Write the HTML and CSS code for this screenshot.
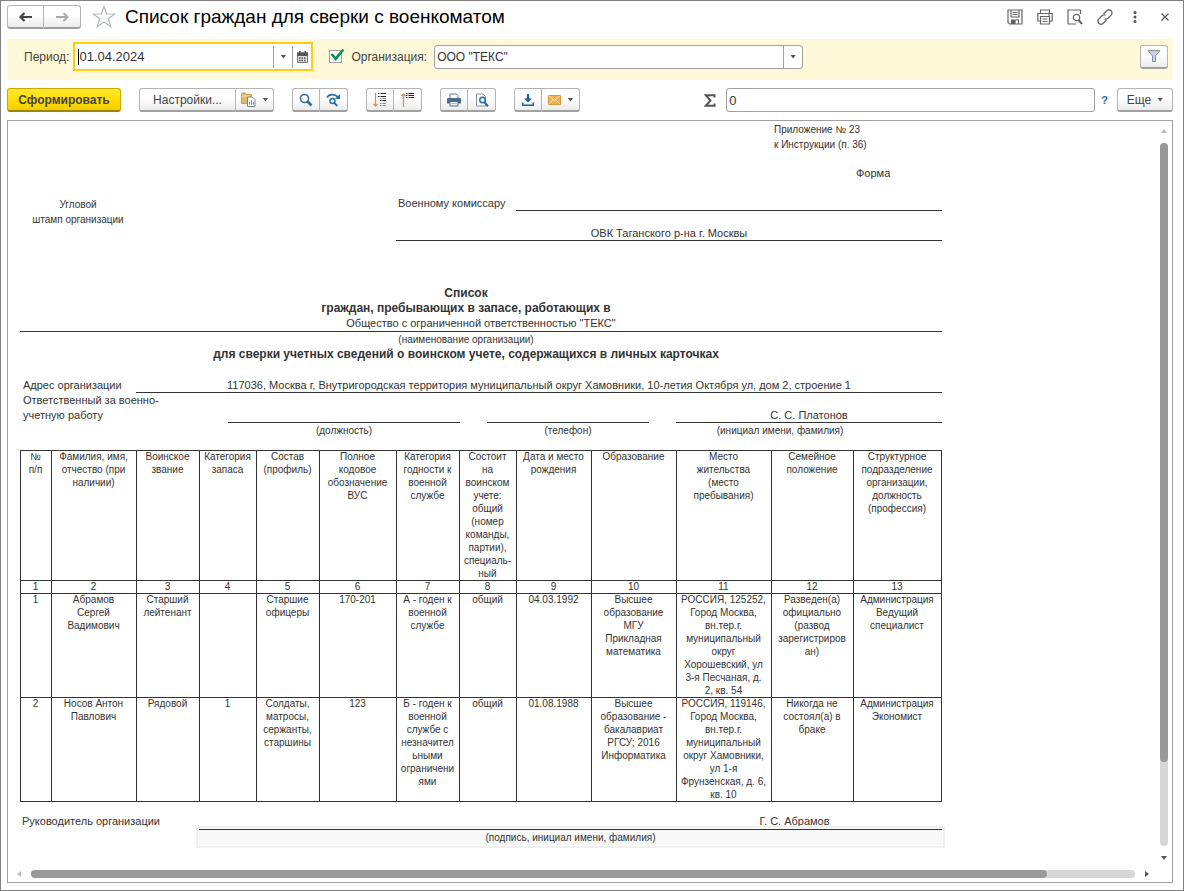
FILE: index.html
```html
<!DOCTYPE html>
<html lang="ru">
<head>
<meta charset="utf-8">
<title>Список граждан для сверки с военкоматом</title>
<link rel="stylesheet" href="styles.css">
</head>
<body>
<div class="window">
  <header class="titlebar">
    <div class="group nav">
      <button class="btn nav-btn" aria-label="Назад"><svg width="16" height="12" viewBox="0 0 16 12"><path d="M6.500 2 2.500 6l4 4M2.500 6H14" fill="none" stroke="#444" stroke-width="2.200"/></svg></button>
      <button class="btn nav-btn" aria-label="Вперед"><svg width="16" height="12" viewBox="0 0 16 12"><path d="M9.500 2l4 4-4 4M13.500 6H2" fill="none" stroke="#aaa" stroke-width="2"/></svg></button>
    </div>
    <button class="plain star" aria-label="В избранное"><svg width="24" height="24" viewBox="0 0 24 24"><path d="M12 1.500 14.700 9H22.800L16.300 13.800 18.800 21.800 12 17 5.200 21.800 7.700 13.800 1.200 9H9.300Z" fill="#fff" stroke="#b4b8bc" stroke-width="1.200"/></svg></button>
    <h1 class="title">Список граждан для сверки с военкоматом</h1>
    <div class="window-tools">
      <button class="plain" aria-label="Сохранить"><svg width="16" height="16" viewBox="0 0 16 16" fill="none" stroke="#666" stroke-width="1.200"><path d="M1 1h14v14H2.500L1 13.500ZM4 1v7h8V1M5.500 3.500h5M5.500 5.500h5M4.500 15v-4h7v4"/><path d="M5 11.500h3v3H5Z" fill="#555"/></svg></button>
      <button class="plain" aria-label="Печать"><svg width="16" height="16" viewBox="0 0 16 16" fill="none" stroke="#666" stroke-width="1.200"><path d="M3.500 4.500V1h9v3.500M3.500 12H.8V4.500h14.400V12h-2.700M3.500 7.500h9V15h-9ZM5.500 10h5M5.500 12.500h5M11 6h2"/></svg></button>
      <button class="plain" aria-label="Просмотр"><svg width="16" height="16" viewBox="0 0 16 16" fill="none" stroke="#666" stroke-width="1.200"><path d="M13.500 5V1H1v14h8"/><circle cx="9.500" cy="8.500" r="3.200"/><path d="m11.500 11 3.500 4" stroke-width="2"/></svg></button>
      <button class="plain" aria-label="Ссылка"><svg width="16" height="16" viewBox="0 0 16 16" fill="none" stroke="#666" stroke-width="1.300"><path d="M6.500 5 9.800 1.800a3 3 0 0 1 4.300 4.300L11 9.300a3 3 0 0 1-3.500.4M9.500 11l-3.300 3.200a3 3 0 0 1-4.300-4.300L5 6.700a3 3 0 0 1 3.500-.4"/></svg></button>
      <button class="plain" aria-label="Меню"><svg width="16" height="16" viewBox="0 0 16 16" fill="#555"><circle cx="8" cy="3.500" r="1.500"/><circle cx="8" cy="8" r="1.500"/><circle cx="8" cy="12.500" r="1.500"/></svg></button>
      <button class="plain" aria-label="Закрыть"><svg width="16" height="16" viewBox="0 0 16 16" fill="none" stroke="#555" stroke-width="1.200"><path d="m4.500 4.500 7 7M11.500 4.500l-7 7"/></svg></button>
    </div>
  </header>

  <section class="filters">
    <label class="label" for="period">Период:</label>
    <div class="field field-active">
      <span class="caret"></span>
      <input class="input input-date" id="period" type="text" value="01.04.2024">
      <button class="addon" aria-label="Выбрать период"><i class="arrow"></i></button>
      <button class="addon" aria-label="Календарь"><svg width="11" height="12" viewBox="0 0 11 12"><path d="M.5 2h10v9.500H.5Z" fill="#ddd" stroke="#777"/><path d="M0 1.500h11v3.500H0ZM2 0h1.500v2H2ZM7.500 0H9v2H7.500Z" fill="#555"/><path d="M2 7h7M2 9.500h7" stroke="#555" stroke-width="1.500" stroke-dasharray="1.500 1"/></svg></button>
    </div>
    <input class="check" id="use-org" type="checkbox" checked>
    <label class="label label-org" for="use-org">Организация:</label>
    <div class="field field-org">
      <select class="input" aria-label="Организация"><option>ООО "ТЕКС"</option></select>
      <span class="addon addon-passive"><i class="arrow"></i></span>
    </div>
    <button class="btn btn-filter" aria-label="Отбор"><svg width="14" height="14" viewBox="0 0 14 14"><path d="M1 1.500h12L8.500 7v5.500h-3V7Z" fill="#c9d2dc" stroke="#8793a0"/></svg></button>
  </section>

  <section class="toolbar">
    <button class="btn btn-main">Сформировать</button>
    <div class="group">
      <button class="btn btn-settings">Настройки...</button>
      <button class="btn btn-wide" aria-label="Варианты отчета"><svg width="15" height="15" viewBox="0 0 15 15"><path d="M.5 2V11.500h10V2.500H5.500L4.500 1h-3Z" fill="#e8b868" stroke="#c99b50"/><path d="M.5 4h10" stroke="#fbe1a5"/><path d="M6.500 5h5L14 7.500v7H6.500Z" fill="#fff" stroke="#6f8799"/><path d="M8.500 12.500V10M10.500 12.500V8.500M12.500 12.500V10" stroke="#d0603c"/></svg><i class="arrow"></i></button>
    </div>
    <div class="group">
      <button class="btn btn-icon" aria-label="Найти"><svg width="14" height="14" viewBox="0 0 14 14" fill="none" stroke="#2d6da3"><circle cx="5.500" cy="5.500" r="4" stroke-width="1.600"/><path d="m8.500 8.500 4 4" stroke-width="2.600"/></svg></button>
      <button class="btn btn-icon" aria-label="Найти далее"><svg width="15" height="14" viewBox="0 0 15 14" fill="none" stroke="#2d6da3"><path d="M1 4.500C3 1 8 .5 12 4" stroke-width="1.800"/><path d="M14 1v5H9Z" fill="#2d6da3" stroke="none"/><circle cx="6.500" cy="8" r="2.500" stroke-width="1.400"/><path d="m8.300 10 3 3" stroke-width="1.800"/></svg></button>
    </div>
    <div class="group">
      <button class="btn btn-icon" aria-label="Развернуть группы"><svg width="14" height="16" viewBox="0 0 14 16" fill="none"><path d="M2.500 1v13M.5 12l2 2 2-2" stroke="#ee7f5c" stroke-width="1.200"/><path d="M5 1.500h1.500M7.500 1.500H13M7 8.500h1.500M9.500 8.500H13M5 4.500h1.500M7.500 4.500H13" stroke="#222"/><path d="M7 6.500h1.500M9.500 6.500H13M7 11.500h1.500M9.500 11.500H13M7 13.500h1.500M9.500 13.500H13" stroke="#888"/></svg></button>
      <button class="btn btn-icon" aria-label="Свернуть группы"><svg width="14" height="16" viewBox="0 0 14 16" fill="none"><path d="M2.500 15V2M.5 4l2-2 2 2" stroke="#ee7f5c" stroke-width="1.200"/><path d="M5 1.500h1.500M7.500 1.500H13M5 3.500h1.500M7.500 3.500H13M5 5.500h1.500M7.500 5.500H13" stroke="#222"/></svg></button>
    </div>
    <div class="group">
      <button class="btn btn-icon" aria-label="Печать"><svg width="14" height="14" viewBox="0 0 14 14"><path d="M3 1h6.500L11 2.500V6H3Z" fill="#fff" stroke="#5a7894"/><path d="M1 5h12q1 0 1 1v4.500H0V6q0-1 1-1Z" fill="#4c6d8f"/><path d="M3 8.500h8V13H3Z" fill="#fff" stroke="#4c6d8f"/><path d="M4.500 10.700h5" stroke="#9ab"/></svg></button>
      <button class="btn btn-icon" aria-label="Предварительный просмотр"><svg width="14" height="14" viewBox="0 0 14 14" fill="none"><path d="M1.500 1h6.500l2.500 2.500V13h-9Z" fill="#fff" stroke="#7d93a8"/><circle cx="7.500" cy="7" r="2.800" fill="#e5f2fb" stroke="#2d6da3" stroke-width="1.500"/><path d="m9.500 9.300 3.500 4" stroke="#2d6da3" stroke-width="2.200"/></svg></button>
    </div>
    <div class="group">
      <button class="btn btn-icon" aria-label="Сохранить как"><svg width="14" height="14" viewBox="0 0 14 14" fill="#1f5f92"><path d="M6 1h2v4.500h3L7 9.500 3 5.500h3ZM1 9.500h1.500v2h9v-2H13V13H1Z"/></svg></button>
      <button class="btn btn-wide" aria-label="Отправить"><svg width="13" height="10" viewBox="0 0 13 10"><path d="M.5.5h12v9H.5Z" fill="#f0b250" stroke="#d9993c"/><path d="m1 1 5.500 4.500L12 1M1 9l4-4M12 9 8 5" fill="none" stroke="#fbe0a8"/></svg><i class="arrow"></i></button>
    </div>
    <label class="sigma" for="sum" aria-label="Сумма"><svg width="12" height="13" viewBox="0 0 12 13"><path d="M10.500 3.500V1.200H1.800L6.500 6.500 1.800 11.800h8.700V9.500" fill="none" stroke="#555" stroke-width="2"/></svg></label>
    <div class="field field-sum"><input class="input input-date" id="sum" type="text" value="0"></div>
    <button class="plain help">?</button>
    <button class="btn btn-more">Еще<i class="arrow"></i></button>
  </section>

  <main class="viewer">
    <div class="page">
      <article class="sheet">
        <div class="top">
          <div class="stamp small">Угловой<br>штамп организации</div>
          <div class="heading">
            <div class="annex small">Приложение № 23<br>к Инструкции (п. 36)</div>
            <div class="form-word">Форма</div>
            <div class="to"><span class="to-label">Военному комиссару</span><span class="to-line line"></span></div>
            <div class="commissariat line">ОВК Таганского р-на г. Москвы</div>
          </div>
        </div>

        <h2 class="heading-text shifted">Список<br>граждан, пребывающих в запасе, работающих в</h2>
        <div class="org-name line">Общество с ограниченной ответственностью "ТЕКС"</div>
        <div class="small caption shifted">(наименование организации)</div>
        <h2 class="heading-text shifted">для сверки учетных сведений о воинском учете, содержащихся в личных карточках</h2>

        <div class="address"><span class="address-label">Адрес организации</span><span class="address-value line">117036, Москва г, Внутригородская территория муниципальный округ Хамовники, 10-летия Октября ул, дом 2, строение 1</span></div>
        <div class="responsible">
          <div class="resp-label">Ответственный за военно-<br>учетную работу</div>
          <div class="resp-post"><div class="blank line"></div><div class="small caption">(должность)</div></div>
          <div class="resp-phone"><div class="blank line"></div><div class="small caption">(телефон)</div></div>
          <div class="resp-name"><div class="blank line">С. С. Платонов</div><div class="small caption caption-name">(инициал имени, фамилия)</div></div>
        </div>

        <table class="people small">
          <colgroup><col class="w31"><col class="w85"><col class="w63"><col class="w57"><col class="w63"><col class="w77"><col class="w63"><col class="w57"><col class="w75"><col class="w85"><col class="w95"><col class="w82"><col class="w88"></colgroup>
          <thead>
            <tr>
              <th>№<br>п/п</th>
              <th>Фамилия, имя,<br>отчество (при<br>наличии)</th>
              <th>Воинское<br>звание</th>
              <th>Категория<br>запаса</th>
              <th>Состав<br>(профиль)</th>
              <th>Полное<br>кодовое<br>обозначение<br>ВУС</th>
              <th>Категория<br>годности к<br>военной<br>службе</th>
              <th>Состоит<br>на<br>воинском<br>учете:<br>общий<br>(номер<br>команды,<br>партии),<br>специаль-<br>ный</th>
              <th>Дата и место<br>рождения</th>
              <th>Образование</th>
              <th>Место<br>жительства<br>(место<br>пребывания)</th>
              <th>Семейное<br>положение</th>
              <th>Структурное<br>подразделение<br>организации,<br>должность<br>(профессия)</th>
            </tr>
            <tr><th>1</th><th>2</th><th>3</th><th>4</th><th>5</th><th>6</th><th>7</th><th>8</th><th>9</th><th>10</th><th>11</th><th>12</th><th>13</th></tr>
          </thead>
          <tbody>
            <tr>
              <td>1</td>
              <td>Абрамов<br>Сергей<br>Вадимович</td>
              <td>Старший<br>лейтенант</td>
              <td></td>
              <td>Старшие<br>офицеры</td>
              <td>170-201</td>
              <td>А - годен к<br>военной<br>службе</td>
              <td>общий</td>
              <td>04.03.1992</td>
              <td>Высшее<br>образование<br>МГУ<br>Прикладная<br>математика</td>
              <td>РОССИЯ, 125252,<br>Город Москва,<br>вн.тер.г.<br>муниципальный<br>округ<br>Хорошевский, ул<br>3-я Песчаная, д.<br>2, кв. 54</td>
              <td>Разведен(а)<br>официально<br>(развод<br>зарегистриров<br>ан)</td>
              <td>Администрация<br>Ведущий<br>специалист</td>
            </tr>
            <tr>
              <td>2</td>
              <td>Носов Антон<br>Павлович</td>
              <td>Рядовой</td>
              <td>1</td>
              <td>Солдаты,<br>матросы,<br>сержанты,<br>старшины</td>
              <td>123</td>
              <td>Б - годен к<br>военной<br>службе с<br>незначител<br>ьными<br>ограничени<br>ями</td>
              <td>общий</td>
              <td>01.08.1988</td>
              <td>Высшее<br>образование -<br>бакалавриат<br>РГСУ; 2016<br>Информатика</td>
              <td>РОССИЯ, 119146,<br>Город Москва,<br>вн.тер.г.<br>муниципальный<br>округ Хамовники,<br>ул 1-я<br>Фрунзенская, д. 6,<br>кв. 10</td>
              <td>Никогда не<br>состоял(а) в<br>браке</td>
              <td>Администрация<br>Экономист</td>
            </tr>
          </tbody>
        </table>

        <div class="signature">
          <span class="sign-label">Руководитель организации</span>
          <span class="sign-name">Г. С. Абрамов</span>
        </div>
        <div class="sign-cell small">(подпись, инициал имени, фамилия)</div>
      </article>
    </div>
    <div class="scroll scroll-v">
      <i class="tip tip-up"></i>
      <div class="track"><div class="thumb"></div></div>
      <i class="tip tip-down"></i>
    </div>
    <div class="scroll scroll-h">
      <i class="tip tip-left"></i>
      <div class="track"><div class="thumb"></div></div>
      <i class="tip tip-right"></i>
    </div>
  </main>
</div>
</body>
</html>
```

FILE: styles.css
```css
* { box-sizing: border-box; }

body {
  margin: 0;
  font-family: "Liberation Sans", Arial, sans-serif;
  font-size: 12px;
  color: #444;
  background: #fff;
}

button, input, select { font: inherit; color: inherit; }
svg { display: block; flex: none; }

.window {
  display: flex;
  flex-direction: column;
  height: 100vh;
  padding: 0 10px 7px 6px;
  border: 1px solid #808080;
}

/* Title bar */
.titlebar {
  display: flex;
  align-items: center;
  height: 38px;
  padding-bottom: 6px;
}

.plain {
  display: flex;
  align-items: center;
  justify-content: center;
  padding: 0;
  border: 0;
  background: none;
}

.star { margin: 0 9px 0 11px; }

.title {
  margin: 0;
  font-size: 19px;
  font-weight: 400;
  line-height: 24px;
  color: #000;
  white-space: nowrap;
}

.window-tools {
  display: flex;
  gap: 14px;
  margin-left: auto;
}

/* Buttons */
.group { display: flex; }

.btn {
  display: flex;
  align-items: center;
  justify-content: center;
  height: 24px;
  padding: 0;
  border: 1px solid #b4b4b4;
  border-bottom: 2px solid #a0a0a0;
  border-radius: 3px;
  background: linear-gradient(#fff 40%, #ececec);
  white-space: nowrap;
}

.group .btn + .btn {
  border-left: 0;
  border-top-left-radius: 0;
  border-bottom-left-radius: 0;
}

.group .btn:first-child {
  border-top-right-radius: 0;
  border-bottom-right-radius: 0;
}

.nav-btn { width: 37px; }
.btn-icon { width: 28px; }
.btn-wide { width: 38px; gap: 7px; }
.btn-settings { width: 97px; }
.btn-more { width: 56px; gap: 6px; }
.btn-filter { width: 28px; margin-left: auto; }

.btn-main {
  width: 114px;
  border-color: #c9ab00;
  border-bottom-color: #9c8500;
  background: linear-gradient(#ffe82e, #ffdc00 60%, #f2cd00);
  font-weight: 700;
}

.arrow {
  width: 6px;
  height: 4px;
  background: #555;
  clip-path: polygon(0 0, 100% 0, 50% 100%);
}

/* Fields */
.field {
  display: flex;
  align-items: center;
  height: 24px;
  border: 1px solid #a0a0a0;
  border-radius: 3px;
  background: #fff;
}

.input {
  flex: 1;
  min-width: 0;
  height: 100%;
  padding: 0 2px;
  border: 0;
  outline: 0;
  background: none;
  color: #333;
  appearance: none;
}

.input-date { font-size: 13px; }

.addon {
  display: flex;
  align-items: center;
  justify-content: center;
  width: 19px;
  height: 22px;
  padding: 0;
  border: 0;
  border-left: 1px solid #a0a0a0;
  background: none;
}

.addon-passive { pointer-events: none; }

.filters {
  display: flex;
  align-items: center;
  height: 41px;
  padding: 0 5px 6px 17px;
  background: #fff9da;
}

.label { white-space: nowrap; }

.field-active {
  width: 240px;
  height: 29px;
  margin-left: 4px;
  padding-left: 3px;
  border: 2px solid #fc1;
  border-radius: 0;
}

.field-active .input { padding: 0; }
.caret { width: 1px; height: 16px; background: #000; }

.check {
  width: 13px;
  height: 13px;
  margin: 0 9px 0 16px;
  appearance: none;
  border: 1px solid #a0a0a0;
  background: #fff;
  overflow: visible;
}

.check:checked::before {
  content: "";
  display: block;
  width: 14px;
  height: 12px;
  margin-top: -2px;
  background: #009646;
  clip-path: polygon(0 45%, 18% 38%, 36% 64%, 86% 0, 100% 8%, 38% 100%);
}

.field-org {
  width: 369px;
  margin-left: 7px;
}

/* Toolbar */
.toolbar {
  display: flex;
  align-items: center;
  gap: 18px;
  height: 40px;
}

.sigma { margin-left: auto; }
.field-sum { width: 369px; margin-left: -8px; }
.help { margin: 0 -9px 0 -12px; font-size: 11px; font-weight: 700; color: #1a6fb0; }

/* Report viewer */
.viewer {
  display: grid;
  flex: 1;
  grid-template-columns: 1fr 16px;
  grid-template-rows: 1fr 16px;
  min-height: 0;
  border: 1px solid #a0a0a0;
}

.page { overflow: hidden; padding: 1px 0 0 12px; }

.sheet {
  width: 922px;
  font-size: 11px;
  line-height: 15px;
  color: #333;
}

.small { font-size: 10px; }
.line { border-bottom: 1px solid #333; }

.top { display: grid; grid-template-columns: 116px 1fr; }
.stamp { padding-top: 75px; text-align: center; }
.heading { padding-left: 260px; }
.annex { padding-left: 378px; }
.form-word { margin: 14px 0 15px; padding-left: 460px; }
.to { display: flex; height: 15px; }
.to-label { padding-left: 2px; width: 120px; }
.to-line { flex: 1; }
.commissariat { height: 15px; margin: 15px 0 45px; text-align: center; }

.heading-text {
  margin: 0;
  font-size: 12px;
  font-weight: 700;
  line-height: 15px;
  text-align: center;
}

.shifted { margin-right: 30px; }
.caption { text-align: center; }
.org-name { text-align: center; }

.address { display: flex; height: 15px; margin-top: 16px; }
.address-label { width: 116px; padding-left: 3px; }
.address-value { flex: 1; text-align: center; white-space: nowrap; }

.responsible {
  display: grid;
  grid-template-columns: 181px 232px 162px 266px;
  column-gap: 27px;
}

.resp-label { padding-left: 3px; white-space: nowrap; }
.blank { height: 30px; padding-top: 15px; text-align: center; }
.caption-name { padding-right: 58px; }

.people {
  width: 922px;
  margin-top: 12px;
  table-layout: fixed;
  border-collapse: separate;
  border-spacing: 0;
  border-right: 1px solid #333;
  border-bottom: 1px solid #333;
  line-height: 13px;
}

.people th,
.people td {
  padding: 0;
  box-shadow: inset 1px 1px #333;
  font-weight: 400;
  text-align: center;
  vertical-align: top;
  white-space: nowrap;
}

.w31 { width: 31px; }
.w57 { width: 57px; }
.w63 { width: 63px; }
.w75 { width: 75px; }
.w77 { width: 77px; }
.w82 { width: 82px; }
.w85 { width: 85px; }
.w88 { width: 88px; }
.w95 { width: 95px; }

.signature { display: flex; margin-top: 12px; }
.sign-label { flex: 1; padding-left: 2px; }
.sign-name { width: 295px; text-align: center; }

/* Selected cell under the signature line */
.sign-cell {
  width: 743px;
  height: 16px;
  margin-left: 179px;
  border-top: 1px solid #333;
  outline: 2px solid #f0f0f0;
  outline-offset: 1px;
  background: #f8f8f8;
  text-align: center;
}

/* Scroll bars */
.scroll { display: flex; align-items: center; }
.scroll-v { flex-direction: column; padding: 8px 0 6px; gap: 10px; }
.scroll-h { gap: 10px; padding: 0 7px 0 9px; }
.track { flex: 1; border-radius: 4px; background: #d6d6d6; }
.thumb { border-radius: 4px; background: #999; }
.scroll-v .track { width: 8px; }
.scroll-v .thumb { height: 88%; }
.scroll-h .track { height: 8px; }
.scroll-h .thumb { width: 92%; height: 8px; }
.tip { background: #555; }
.tip-up, .tip-down { width: 6px; height: 4px; }
.tip-left, .tip-right { width: 4px; height: 6px; }
.tip-up { background: #bbb; clip-path: polygon(50% 0, 100% 100%, 0 100%); }
.tip-down { clip-path: polygon(0 0, 100% 0, 50% 100%); }
.tip-left { background: #bbb; clip-path: polygon(100% 0, 100% 100%, 0 50%); }
.tip-right { clip-path: polygon(0 0, 100% 50%, 0 100%); }
```
